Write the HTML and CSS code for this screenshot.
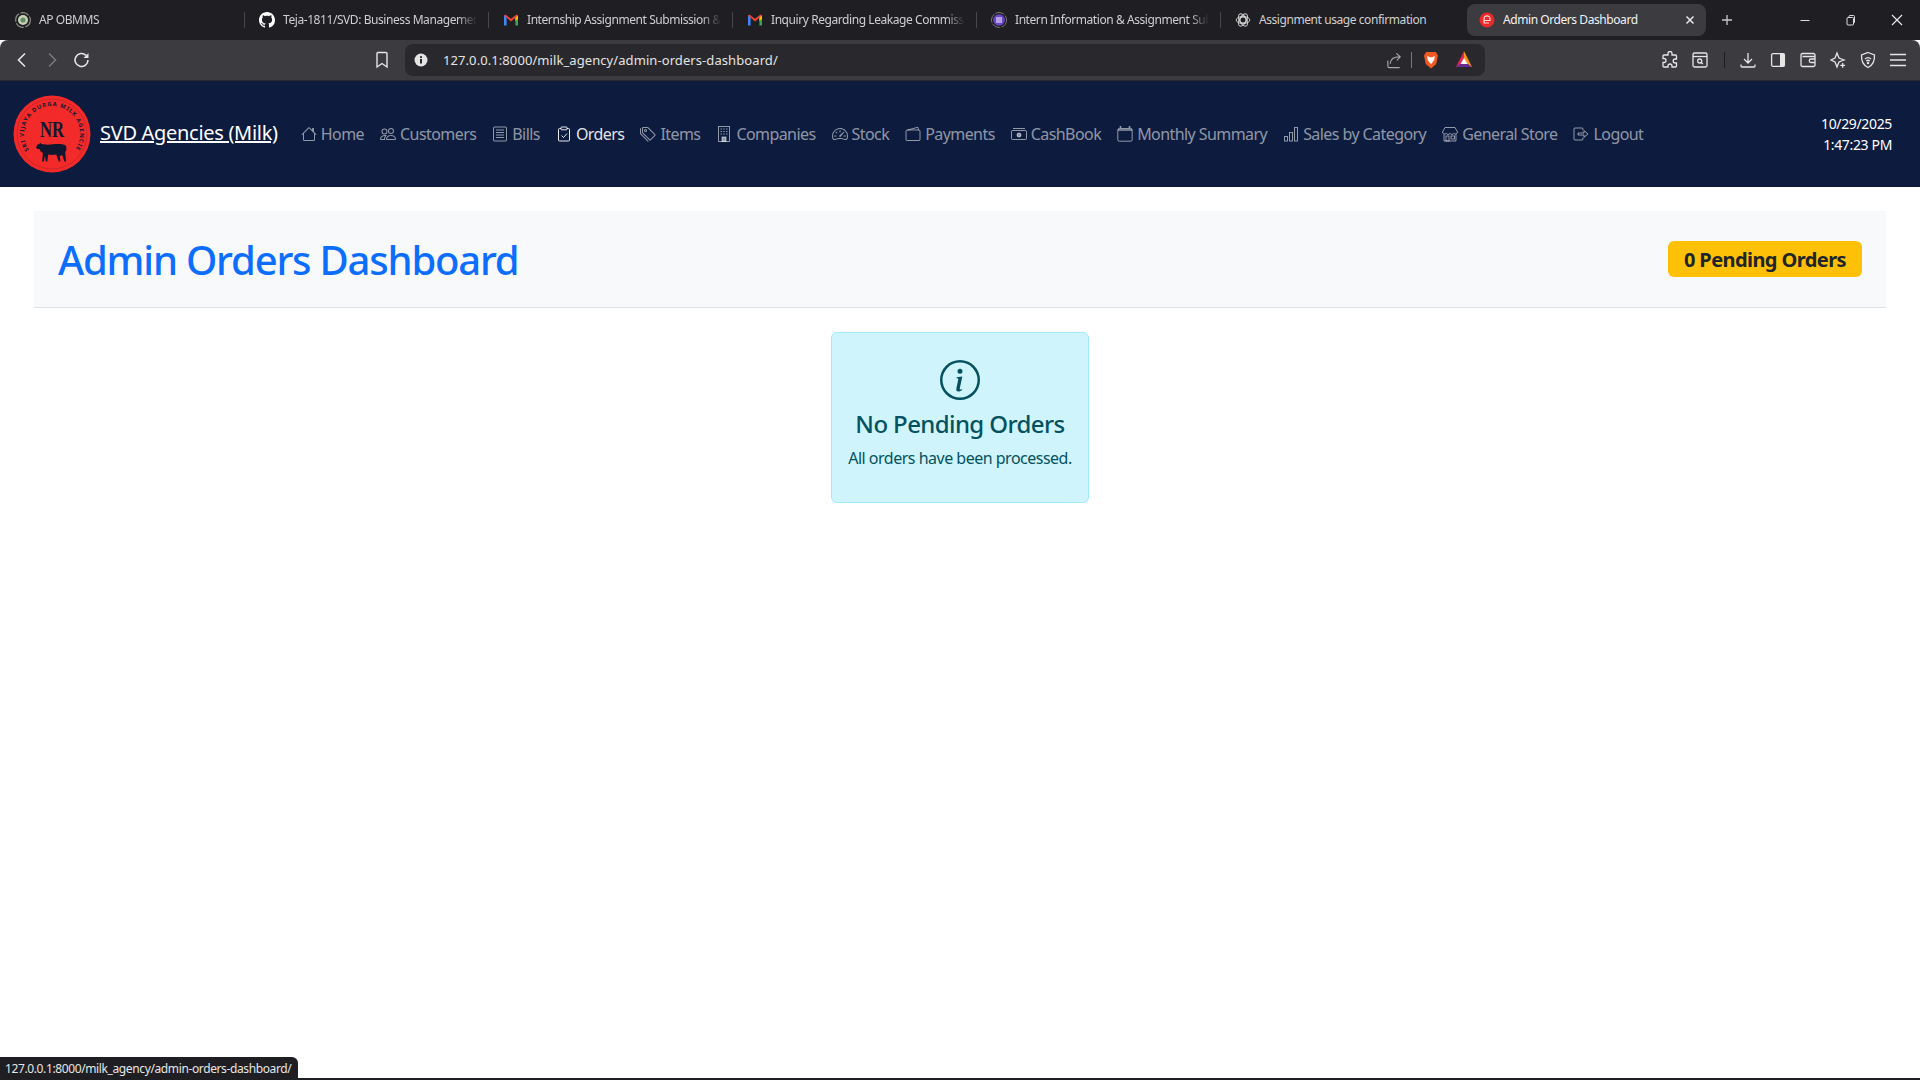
FILE: index.html
```html
<!DOCTYPE html>
<html lang="en">
<head>
<meta charset="utf-8">
<title>Admin Orders Dashboard</title>
<link rel="stylesheet" href="styles.css">
</head>
<body>
<div class="tabstrip">
  <div class="tab">
    <svg class="fav" viewBox="0 0 16 16"><circle cx="8" cy="8" r="7.3" fill="none" stroke="#8a8f88" stroke-width="1.2" stroke-dasharray="9 1.5"/><circle cx="8" cy="8" r="5" fill="#c9d3b4"/><circle cx="8" cy="8" r="2.6" fill="#5f8f6a"/></svg>
    <span class="tab-title">AP OBMMS</span>
  </div>
  <div class="tab">
    <svg class="fav" viewBox="0 0 16 16"><path fill="#fff" d="M8 0C3.58 0 0 3.58 0 8c0 3.54 2.29 6.53 5.47 7.59.4.07.55-.17.55-.38 0-.19-.01-.82-.01-1.49-2.01.37-2.53-.49-2.69-.94-.09-.23-.48-.94-.82-1.13-.28-.15-.68-.52-.01-.53.63-.01 1.08.58 1.23.82.72 1.21 1.87.87 2.33.66.07-.52.28-.87.51-1.07-1.78-.2-3.64-.89-3.64-3.95 0-.87.31-1.59.82-2.15-.08-.2-.36-1.02.08-2.12 0 0 .67-.21 2.2.82.64-.18 1.32-.27 2-.27.68 0 1.36.09 2 .27 1.53-1.04 2.2-.82 2.2-.82.44 1.1.16 1.92.08 2.12.51.56.82 1.27.82 2.15 0 3.07-1.87 3.75-3.65 3.95.29.25.54.73.54 1.48 0 1.07-.01 1.93-.01 2.2 0 .21.15.46.55.38A8.013 8.013 0 0016 8c0-4.42-3.58-8-8-8z"/></svg>
    <span class="tab-title">Teja-1811/SVD: Business Management</span>
  </div>
  <div class="tab">
    <svg class="fav" viewBox="0 0 16 16"><path fill="#4285f4" d="M1 3.5h2.6V13.5H1.6A.6.6 0 0 1 1 12.9z"/><path fill="#34a853" d="M12.4 3.5H15v9.4a.6.6 0 0 1-.6.6h-2z"/><path fill="#ea4335" d="M1 3.6 2.4 2.4 8 6.8l5.6-4.4L15 3.6 8 9.4z"/><path fill="#fbbc04" d="M12.4 5.6 15 3.6V7l-2.6 2z"/></svg>
    <span class="tab-title">Internship Assignment Submission &amp; D</span>
  </div>
  <div class="tab">
    <svg class="fav" viewBox="0 0 16 16"><path fill="#4285f4" d="M1 3.5h2.6V13.5H1.6A.6.6 0 0 1 1 12.9z"/><path fill="#34a853" d="M12.4 3.5H15v9.4a.6.6 0 0 1-.6.6h-2z"/><path fill="#ea4335" d="M1 3.6 2.4 2.4 8 6.8l5.6-4.4L15 3.6 8 9.4z"/><path fill="#fbbc04" d="M12.4 5.6 15 3.6V7l-2.6 2z"/></svg>
    <span class="tab-title">Inquiry Regarding Leakage Commissi</span>
  </div>
  <div class="tab">
    <svg class="fav" viewBox="0 0 16 16"><circle cx="8" cy="8" r="7.5" fill="none" stroke="#77777c" stroke-width="1" stroke-dasharray="9 1.5"/><circle cx="8" cy="8" r="5.8" fill="#6a45c8"/><path stroke="#fff" stroke-width="1" d="M5 6h6M5 8h6M5 10h6"/></svg>
    <span class="tab-title">Intern Information &amp; Assignment Sub</span>
  </div>
  <div class="tab tab-last">
    <svg class="fav" viewBox="0 0 16 16" fill="none" stroke="#d5d5d5" stroke-width=".9"><circle cx="8" cy="8" r="3"/><ellipse cx="8" cy="8" rx="6.8" ry="3.6"/><ellipse cx="8" cy="8" rx="6.8" ry="3.6" transform="rotate(60 8 8)"/><ellipse cx="8" cy="8" rx="6.8" ry="3.6" transform="rotate(120 8 8)"/></svg>
    <span class="tab-title active-title">Assignment usage confirmation</span>
  </div>
  <div class="tab-active">
    <svg class="fav" viewBox="0 0 16 16"><circle cx="8" cy="8" r="7.5" fill="#e82a2a"/><path fill="none" stroke="#ffd8d8" stroke-width="1.2" d="M5 8.5h6V6.8a3 3 0 0 0-6 0V11h5"/></svg>
    <span class="tab-title active-title">Admin Orders Dashboard</span>
    <svg class="tab-close" viewBox="0 0 10 10"><path stroke="#e8e8e8" stroke-width="1.5" d="M1.5 1.5l7 7M8.5 1.5l-7 7"/></svg>
  </div>
  <div class="newtab"><svg class="win" viewBox="0 0 12 12"><path stroke="#c9c9cc" stroke-width="1.3" d="M6 1v10M1 6h10"/></svg></div>
  <div class="winctl">
    <div class="wbtn"><svg class="win" viewBox="0 0 12 12"><path stroke="#ddd" d="M1.5 6.5h9"/></svg></div>
    <div class="wbtn"><svg class="win" viewBox="0 0 12 12" fill="none" stroke="#ddd"><rect x="2" y="3.5" width="6.5" height="7.5" rx="1"/><path d="M4 3.5V2.5a1 1 0 0 1 1-1h3.5a1 1 0 0 1 1 1V8a1 1 0 0 1-1 1"/></svg></div>
    <div class="wbtn"><svg class="win" viewBox="0 0 12 12"><path stroke="#eee" stroke-width="1.1" d="M1 1l10 10M11 1L1 11"/></svg></div>
  </div>
</div>

<div class="toolbar">
  <div class="tcell"><svg class="ticon" viewBox="0 0 18 18" fill="none" stroke="#e6e6e6" stroke-width="1.6"><path d="M12 2.5 5.5 9l6.500 6.500"/></svg></div>
  <div class="tcell"><svg class="ticon" viewBox="0 0 18 18" fill="none" stroke="#77777c" stroke-width="1.6"><path d="M6 2.500 12.500 9 6 15.500"/></svg></div>
  <div class="tcell"><svg class="ticon" viewBox="0 0 18 18" fill="none" stroke="#e6e6e6" stroke-width="1.6"><path d="M15 9a6.500 6.500 0 1 1-2-4.700"/><path fill="#e6e6e6" stroke="none" d="M15.500 2v5h-5z"/></svg></div>
  <div class="tcell bookmark"><svg class="ticon" viewBox="0 0 18 18" fill="none" stroke="#e6e6e6" stroke-width="1.4"><path d="M4 2.500a1 1 0 0 1 1-1h8a1 1 0 0 1 1 1V16l-5-3.500L4 16z"/></svg></div>
  <div class="urlbar">
    <svg class="info" viewBox="0 0 14 14"><circle cx="7" cy="7" r="6.500" fill="#e4e4e4"/><rect x="6" y="6" width="2" height="4.500" fill="#29292d"/><rect x="6" y="3.200" width="2" height="1.800" fill="#29292d"/></svg>
    <span class="url">127.0.0.1:8000/milk_agency/admin-orders-dashboard/</span>
    <svg class="ticon share" viewBox="0 0 18 18" fill="none" stroke="#a9a9ad" stroke-width="1.2"><path d="M2 9v6a1.500 1.500 0 0 0 1.500 1.500h11M4.500 12.500c0-5 3.500-7.500 10-7.500M11 1.500 15 5l-3.500 4"/></svg>
    <span class="url-sep"></span>
    <svg class="ticon brave" viewBox="0 0 18 18"><path fill="#f15a22" d="M4.200 1h9.600L16 4.500l-1.800 8.500L9 17.500 3.800 13 2 4.500z"/><path fill="#fff" d="M5.200 5 8 6.200h2L12.800 5l-.6 4L10 12l-1 1.200L8 12 5.800 9z"/></svg>
    <svg class="ticon bat" viewBox="0 0 18 18"><path fill="#e0245e" d="M9 0 1 16h8z"/><path fill="#f7941d" d="M9 0l8 16H9z"/><path fill="#662d91" d="M1 16l4-3h8l4 3z"/><path fill="#fff" d="M9 7l3.500 6h-7z"/></svg>
  </div>
  <div class="tcell tright"><svg class="ticon" viewBox="0 0 18 18" fill="none" stroke="#e6e6e6" stroke-width="1.300"><path d="M7 2.500a2 2 0 0 1 4 0V4h3.500a1 1 0 0 1 1 1v3h-1.300a2 2 0 0 0 0 4h1.300v3a1 1 0 0 1-1 1H11v-1a2 2 0 0 0-4 0v1H3a1 1 0 0 1-1-1v-3.500h1a2 2 0 0 0 0-4H2V5a1 1 0 0 1 1-1h4z"/></svg></div>
  <div class="tcell"><svg class="ticon" viewBox="0 0 18 18" fill="none" stroke="#e6e6e6" stroke-width="1.300"><rect x="2" y="2" width="14" height="14" rx="1.500"/><path d="M2 5.500h14"/><circle cx="8.700" cy="10" r="2"/><path d="M10.300 11.500l1.500 1.500"/></svg></div>
  <div class="tsep"><span></span></div>
  <div class="tcell"><svg class="ticon" viewBox="0 0 18 18" fill="none" stroke="#e6e6e6" stroke-width="1.300"><path d="M9 2v10M5 8l4 4 4-4M2 13.500V15a1 1 0 0 0 1 1h12a1 1 0 0 0 1-1v-1.500"/></svg></div>
  <div class="tcell"><svg class="ticon" viewBox="0 0 18 18"><rect x="2.600" y="2.600" width="12.800" height="12.800" rx="1.500" fill="none" stroke="#e6e6e6" stroke-width="1.300"/><rect x="11" y="2.600" width="4.400" height="12.800" fill="#e6e6e6"/></svg></div>
  <div class="tcell"><svg class="ticon" viewBox="0 0 18 18" fill="none" stroke="#e6e6e6" stroke-width="1.300"><path d="M16 5.500V4a1.500 1.500 0 0 0-1.500-1.500h-11A1.500 1.500 0 0 0 2 4v10a1.500 1.500 0 0 0 1.500 1.500h11A1.500 1.500 0 0 0 16 14V5.500H3.500"/><path d="M16 8h-4a1.500 1.500 0 0 0 0 3.500h4"/></svg></div>
  <div class="tcell"><svg class="ticon" viewBox="0 0 18 18" fill="none" stroke="#e6e6e6" stroke-width="1.300"><path d="M8 2l2 5 5 2-5 2-2 5-2-5-4-2 4-2z"/><path fill="#e6e6e6" stroke="none" d="M13 12h1.300v1.700H16V15h-1.700v1.700H13V15h-1.700v-1.300H13z"/></svg></div>
  <div class="tcell"><svg class="ticon" viewBox="0 0 18 18" fill="none" stroke="#e6e6e6" stroke-width="1.300"><path d="M9 1.500 15.500 4c.3 5.500-1 10-6.500 12.500C3.500 14 2.200 9.500 2.500 4z"/><path d="M6 8a4.500 4.500 0 0 1 6 0M7.300 10a2.500 2.500 0 0 1 3.400 0"/><circle cx="9" cy="12" r=".6"/></svg></div>
  <div class="tcell"><svg class="ticon" viewBox="0 0 18 18"><path stroke="#e6e6e6" stroke-width="1.600" d="M1 3.500h16M1 9h16M1 14.500h16"/></svg></div>
</div>

<nav class="navbar">
  <a class="brand" href="#">
    <svg class="logo" viewBox="0 0 78 78" role="img" aria-label="SVD Agencies logo">
      <circle cx="39" cy="39" r="38.500" fill="#f32a2a"/>
      <circle cx="39" cy="39" r="35" fill="none" stroke="#c4222a" stroke-width=".8"/>
      <defs><path id="ring" d="M16 55A28 28 0 1 1 62 55"/></defs>
      <text class="ring-text"><textPath href="#ring" textLength="124">SRI VIJAYA DURGA MILK AGENCIES</textPath></text>
      <text class="nr-text" x="27" y="42" textLength="24" lengthAdjust="spacingAndGlyphs">NR</text>
      <path fill="#0f1830" d="M23 52.500l1.500-3 2-.5.5-1.500 1.500 1.500 3.500.5c4 .5 9-.5 13-.5 4 0 7 .5 8 2 1 2 .3 5-.8 6l.8 9.500h-1.600l-2.200-6.500-2.500 1 .7 5.500h-1.600l-2.500-7c-3 .5-6 .5-8 0l-1 7h-1.600l-.6-5.500-1.400 5.500h-1.600l.8-8.500c-2-1-3-2.500-3.500-4h-2z"/>
    </svg>
    <span class="brand-name">SVD Agencies (Milk)</span>
  </a>
  <div class="navlinks">
    <a class="navlink" href="#"><svg class="bi" viewBox="0 0 16 16"><path d="M8.707 1.500a1 1 0 0 0-1.414 0L.646 8.146a.5.500 0 0 0 .708.708L2 8.207V13.500A1.500 1.500 0 0 0 3.500 15h9a1.500 1.500 0 0 0 1.500-1.500V8.207l.646.647a.5.500 0 0 0 .708-.708L13 5.793V2.500a.5.500 0 0 0-.5-.5h-1a.5.500 0 0 0-.5.500v1.293zM13 7.207V13.500a.5.500 0 0 1-.5.500h-9a.5.500 0 0 1-.5-.5V7.207l5-5z"/></svg>Home</a>
    <a class="navlink" href="#"><svg class="bi" viewBox="0 0 16 16"><path d="M15 14s1 0 1-1-1-4-5-4-5 3-5 4 1 1 1 1zm-7.978-1L7 12.996c.001-.264.167-1.030.760-1.720C8.312 10.629 9.282 10 11 10c1.717 0 2.687.630 3.240 1.276.593.690.758 1.457.760 1.720l-.008.002-.014.002zM11 7a2 2 0 1 0 0-4 2 2 0 0 0 0 4m3-2a3 3 0 1 1-6 0 3 3 0 0 1 6 0M6.936 9.280a6 6 0 0 0-1.230-.247A7 7 0 0 0 5 9c-4 0-5 3-5 4q0 1 1 1h4.216A2.240 2.240 0 0 1 5 13c0-1.010.377-2.042 1.090-2.904.243-.294.526-.569.846-.816M4.920 10A5.500 5.500 0 0 0 4 13H1c0-.26.164-1.030.760-1.724.545-.636 1.492-1.256 3.160-1.275ZM1.500 5.500a3 3 0 1 1 6 0 3 3 0 0 1-6 0m3-2a2 2 0 1 0 0 4 2 2 0 0 0 0-4"/></svg>Customers</a>
    <a class="navlink" href="#"><svg class="bi bi-line" viewBox="0 0 16 16"><rect x="1.500" y="1" width="13" height="14" rx="1"/><path d="M4 4h8M4 6.500h8M4 9h8M4 11.500h8"/></svg>Bills</a>
    <a class="navlink active" href="#"><svg class="bi bi-line" viewBox="0 0 16 16"><path d="M5 2.500H3.500a1 1 0 0 0-1 1V14a1 1 0 0 0 1 1h9a1 1 0 0 0 1-1V3.500a1 1 0 0 0-1-1H11"/><rect x="5" y="1" width="6" height="2.800" rx=".6"/><path d="M5.500 9.500l2 2 3.500-4"/></svg>Orders</a>
    <a class="navlink" href="#"><svg class="bi" viewBox="0 0 16 16"><path d="M3 2v4.586l7 7L14.586 9l-7-7zM2 2a1 1 0 0 1 1-1h4.586a1 1 0 0 1 .707.293l7 7a1 1 0 0 1 0 1.414l-4.586 4.586a1 1 0 0 1-1.414 0l-7-7A1 1 0 0 1 2 6.586z"/><path d="M5.500 5a.5.500 0 1 1 0-1 .5.500 0 0 1 0 1m0 1a1.500 1.500 0 1 0 0-3 1.500 1.500 0 0 0 0 3M1 7.086a1 1 0 0 0 .293.707L8.750 15.250l-.043.043a1 1 0 0 1-1.414 0l-7-7A1 1 0 0 1 0 7.586V3a1 1 0 0 1 1-1z"/></svg>Items</a>
    <a class="navlink" href="#"><svg class="bi bi-line" viewBox="0 0 16 16"><rect x="2.500" y=".5" width="11" height="15"/><path d="M4.500 3h1.500M7.200 3h1.500M10 3h1.500M4.500 5.500h1.500M7.200 5.500h1.500M10 5.500h1.500M4.500 8h1.500M7.200 8h1.500M10 8h1.500"/><rect class="bi-fill" x="6" y="11" width="4" height="4.500"/></svg>Companies</a>
    <a class="navlink" href="#"><svg class="bi" viewBox="0 0 16 16"><path d="M8 4a.5.500 0 0 1 .5.500V6a.5.500 0 0 1-1 0V4.500A.5.500 0 0 1 8 4M3.732 5.732a.5.500 0 0 1 .707 0l.915.914a.5.500 0 1 1-.708.708l-.914-.915a.5.500 0 0 1 0-.707M2 10a.5.500 0 0 1 .5-.5h1.586a.5.500 0 0 1 0 1H2.500A.5.500 0 0 1 2 10m9.500 0a.5.500 0 0 1 .5-.5h1.500a.5.500 0 0 1 0 1H12a.5.500 0 0 1-.5-.5m.754-4.246a.39.390 0 0 0-.527-.02L7.547 9.310a.91.910 0 1 0 1.302 1.258l3.434-4.297a.39.390 0 0 0-.029-.518z"/><path d="M0 10a8 8 0 1 1 15.547 2.661c-.442 1.253-1.845 1.602-2.932 1.250C11.309 13.488 9.475 13 8 13c-1.474 0-3.310.488-4.615.911-1.087.352-2.490.003-2.932-1.250A8 8 0 0 1 0 10m8-7a7 7 0 0 0-6.603 9.329c.203.575.923.876 1.680.630C4.397 12.533 6.358 12 8 12s3.604.532 4.923.960c.757.245 1.477-.056 1.680-.631A7 7 0 0 0 8 3"/></svg>Stock</a>
    <a class="navlink" href="#"><svg class="bi bi-line" viewBox="0 0 16 16"><path d="M1 5.500A1.500 1.500 0 0 1 2.500 4h11A1.500 1.500 0 0 1 15 5.500v8a1 1 0 0 1-1 1H2a1 1 0 0 1-1-1z"/><path d="M2.500 4 12 1.500a1 1 0 0 1 1.300 1L13.500 4"/></svg>Payments</a>
    <a class="navlink" href="#"><svg class="bi bi-line" viewBox="0 0 16 16"><rect x=".5" y="4.500" width="15" height="9" rx="1"/><path d="M2 2.500h12"/><circle class="bi-fill" cx="8" cy="9" r="2"/></svg>CashBook</a>
    <a class="navlink" href="#"><svg class="bi bi-line" viewBox="0 0 16 16"><rect x=".8" y="2.500" width="14.400" height="12.700" rx="1.500"/><path class="bi-thick" d="M1 4h14M3.500 0v2M12.500 0v2"/></svg>Monthly Summary</a>
    <a class="navlink" href="#"><svg class="bi bi-line" viewBox="0 0 16 16"><rect x="1.500" y="10.500" width="3" height="4.500"/><rect x="6.500" y="6.500" width="3" height="8.500"/><rect x="11.500" y="1.500" width="3" height="13.500"/></svg>Sales by Category</a>
    <a class="navlink" href="#"><svg class="bi bi-line" viewBox="0 0 16 16"><path d="M3 1.500h10l2.500 4.500a2.100 2.100 0 0 1-3.750 1.300A2.100 2.100 0 0 1 8 7.300a2.100 2.100 0 0 1-3.750 0A2.100 2.100 0 0 1 .5 6z"/><path d="M2 8.500v6.500h12V8.500"/><rect x="4" y="10" width="3" height="5"/><rect x="9" y="10" width="3.500" height="3"/></svg>General Store</a>
    <a class="navlink" href="#"><svg class="bi bi-line" viewBox="0 0 16 16"><path d="M10 4.500V3a1 1 0 0 0-1-1H2a1 1 0 0 0-1 1v10a1 1 0 0 0 1 1h7a1 1 0 0 0 1-1v-1.500"/><path d="M5 7h6V4.700L15 8l-4 3.300V9H5z"/></svg>Logout</a>
  </div>
  <div class="clock">
    <div>10/29/2025</div>
    <div>1:47:23 PM</div>
  </div>
</nav>

<main class="content">
  <header class="page-head">
    <h1 class="page-title">Admin Orders Dashboard</h1>
    <span class="count-badge">0 Pending Orders</span>
  </header>
  <section class="empty">
    <svg class="empty-icon" viewBox="0 0 16 16"><path d="M8 15A7 7 0 1 1 8 1a7 7 0 0 1 0 14m0 1A8 8 0 1 0 8 0a8 8 0 0 0 0 16"/><path d="m8.930 6.588-2.290.287-.082.380.450.083c.294.070.352.176.288.469l-.738 3.468c-.194.897.105 1.319.808 1.319.545 0 1.178-.252 1.465-.598l.088-.416c-.2.176-.492.246-.686.246-.275 0-.375-.193-.304-.533zM9 4.500a1 1 0 1 1-2 0 1 1 0 0 1 2 0"/></svg>
    <h4 class="empty-title">No Pending Orders</h4>
    <p class="empty-text">All orders have been processed.</p>
  </section>
</main>
<div class="status-bubble">127.0.0.1:8000/milk_agency/admin-orders-dashboard/</div>
<div class="bottom-edge"></div>
</body>
</html>
```

FILE: styles.css
```css
* { box-sizing: border-box; }
html, body { height: 100%; }
body {
  margin: 0;
  display: flex;
  flex-direction: column;
  height: 100vh;
  overflow: hidden;
  background: #fff;
  font-family: "Noto Sans", "Open Sans", sans-serif;
  color: #212529;
}

/* browser tab strip */
.tabstrip {
  height: 40px;
  flex: none;
  display: flex;
  align-items: center;
  padding-left: 1px;
  background: #1f1f23;
  color: #cfcfd2;
  font-size: 12px;
  letter-spacing: -0.43px;
}
.tab {
  width: 244px;
  height: 16px;
  flex: none;
  display: flex;
  align-items: center;
  gap: 8px;
  padding: 0 11px 0 14px;
  border-right: 1px solid #48484c;
}
.tab-last { border-right: none; }
.fav { width: 16px; height: 16px; flex: none; }
.tab-title {
  flex: 1;
  min-width: 0;
  margin-top: -1px;
  white-space: nowrap;
  overflow: hidden;
  -webkit-mask-image: linear-gradient(to right, #000 90%, transparent 100%);
  mask-image: linear-gradient(to right, #000 90%, transparent 100%);
}
.tab-active {
  width: 239px;
  height: 32px;
  margin-left: 2px;
  flex: none;
  display: flex;
  align-items: center;
  gap: 8px;
  padding: 0 11px 0 12px;
  border-radius: 8px;
  background: #3b3b40;
  color: #f2f2f2;
}
.active-title { -webkit-mask-image: none; mask-image: none; }
.tab-close { width: 10px; height: 10px; flex: none; }
.newtab { width: 30px; margin-left: 6px; display: flex; justify-content: center; }
.win { width: 12px; height: 12px; display: block; }
.winctl { margin-left: auto; display: flex; }
.wbtn { width: 46px; display: flex; justify-content: center; }

/* browser toolbar */
.toolbar {
  height: 41px;
  flex: none;
  display: flex;
  align-items: center;
  padding: 0 7px;
  background: #3b3b40;
  border-radius: 8px 8px 0 0;
  border-bottom: 1px solid #2a2a2e;
}
.tcell { width: 30px; flex: none; display: flex; justify-content: center; }
.ticon { width: 18px; height: 18px; display: block; flex: none; }
.bookmark { margin-left: 270px; }
.urlbar {
  width: 1080px;
  height: 32px;
  margin-left: 8px;
  flex: none;
  display: flex;
  align-items: center;
  padding: 0 12px 0 9px;
  border-radius: 8px;
  background: #29292d;
}
.info { width: 14px; height: 14px; flex: none; }
.url {
  margin-left: 15px;
  color: #e4e4e4;
  font-size: 13px;
  letter-spacing: .08px;
  white-space: nowrap;
}
.share { margin-left: auto; width: 17px; height: 17px; }
.url-sep { width: 1px; height: 16px; margin: 0 10px 0 8px; background: #77777c; }
.brave { margin-right: 15px; }
.tright { margin-left: auto; }
.tsep { width: 18px; flex: none; display: flex; justify-content: center; }
.tsep span { width: 1px; height: 16px; background: #1f1f23; }

/* site navbar */
.navbar {
  height: 106px;
  flex: none;
  display: flex;
  align-items: center;
  padding: 0 28px 0 13px;
  background: #0d1b3e;
}
.brand { display: flex; align-items: center; gap: 9px; color: #fff; }
.logo { width: 78px; height: 78px; display: block; flex: none; }
.ring-text { font: 700 5.800px "Noto Sans", sans-serif; fill: #15192f; }
.nr-text { font: 700 24px "Liberation Serif", serif; fill: #0f1830; }
.brand-name {
  margin-top: -3px;
  font-size: 20px;
  letter-spacing: -0.3px;
  text-decoration: underline;
  white-space: nowrap;
}
.navlinks { display: flex; margin-left: 15px; }
.navlink {
  display: flex;
  align-items: center;
  padding: 0 8px;
  color: rgba(255, 255, 255, .55);
  font-size: 16px;
  letter-spacing: -0.57px;
  text-decoration: none;
  white-space: nowrap;
}
.navlink.active { color: rgba(255, 255, 255, .9); }
.bi { width: 16px; height: 16px; margin-right: 4px; flex: none; fill: currentColor; }
.bi-line { fill: none; stroke: currentColor; stroke-width: 1; }
.bi-fill { fill: currentColor; }
.bi-thick { stroke-width: 1.6; }
.clock {
  margin-left: auto;
  color: #fff;
  font-size: 14px;
  line-height: 21px;
  letter-spacing: -0.35px;
  text-align: right;
}

/* page content */
.content { flex: 1; min-height: 0; padding: 24px 34px 0; }
.page-head {
  height: 97px;
  display: flex;
  align-items: center;
  justify-content: space-between;
  padding: 0 24px;
  margin-bottom: 24px;
  background: #f8f9fa;
  border-bottom: 1px solid #dee2e6;
}
.page-title {
  margin: 2px 0 0;
  color: #0d6efd;
  font-size: 40px;
  line-height: 48px;
  font-weight: 500;
  letter-spacing: -1.2px;
}
.count-badge {
  height: 36px;
  display: flex;
  align-items: center;
  padding: 0 16px;
  border-radius: 6px;
  background: #ffc107;
  color: #212529;
  font-size: 20px;
  font-weight: 700;
  letter-spacing: -0.58px;
}
.empty {
  width: 258px;
  margin: 0 auto;
  padding: 27px 0 32px;
  text-align: center;
  background: #cff4fc;
  border: 1px solid #9eeaf9;
  border-radius: 6px;
  color: #055160;
}
.empty-icon { width: 40px; height: 40px; display: block; margin: 0 auto 9px; fill: currentColor; }
.empty-title { margin: 0 0 8px; font-size: 24px; line-height: 29px; font-weight: 500; letter-spacing: -0.6px; }
.empty-text { margin: 0; font-size: 16px; line-height: 24px; letter-spacing: -0.5px; }

/* browser status bubble and window edge */
.status-bubble {
  position: fixed;
  left: 0;
  bottom: 0;
  width: 298px;
  height: 23px;
  padding-left: 5px;
  background: #1f1f23;
  border-radius: 0 6px 0 0;
  color: #e6e6e6;
  font-size: 12px;
  line-height: 23px;
  letter-spacing: -0.38px;
  white-space: nowrap;
}
.bottom-edge { height: 2px; flex: none; background: #1f1f23; }
```
